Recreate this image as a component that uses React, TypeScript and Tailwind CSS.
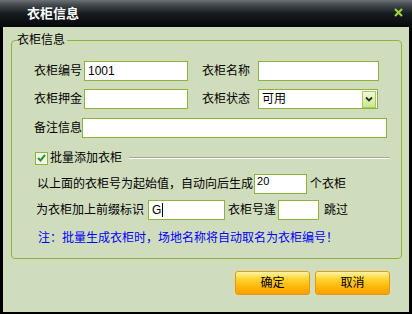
const font = "font-['Liberation_Sans','Noto_Sans_CJK_SC',sans-serif]";

function Box({ w, value = "" }: { w: string; value?: string }) {
  return (
    <input
      readOnly
      defaultValue={value}
      className={`${w} h-[20px] border border-[#8db33a] bg-white pl-[3px] text-[12px] text-black outline-none ${font}`}
    />
  );
}

export default function App() {
  return (
    <div className={`flex h-[314px] w-[412px] flex-col bg-black text-[12px] text-black ${font}`}>
      {/* title bar */}
      <div className="flex h-[27px] items-center justify-between bg-[linear-gradient(to_bottom,#6e7276_0%,#43494e_18%,#161c21_50%,#05080a_100%)] pl-[27px] pr-[9px]">
        <span className="text-[13px] font-bold leading-[16px] text-white">衣柜信息</span>
        <svg width="9" height="9" viewBox="0 0 9 9" className="mt-[-2px]">
          <path d="M1 1 L8 8 M8 1 L1 8" stroke="#9fd13a" strokeWidth="2.2" />
        </svg>
      </div>

      {/* body */}
      <div className="mx-[3px] mb-[2px] flex flex-1 flex-col bg-[#d0ddbd]">
        <fieldset className="ml-[8px] mr-[7px] mt-[6px] rounded-[4px] border border-[#8db33a]">
          <legend className="ml-[5px] pr-[2px] leading-[15px]">衣柜信息</legend>
          <div className="flex flex-col pb-[12px] pl-[22px] pt-[13px] leading-[16px]">
            <div className="flex h-[20px] items-center">
              <span className="w-[48px]">衣柜编号</span>
              <div className="ml-[2px]">
                <Box w="w-[104px]" value="1001" />
              </div>
              <span className="ml-[14px] w-[48px]">衣柜名称</span>
              <div className="ml-[8px]">
                <Box w="w-[121px]" />
              </div>
            </div>

            <div className="mt-[8px] flex h-[20px] items-center">
              <span className="w-[48px]">衣柜押金</span>
              <div className="ml-[2px]">
                <Box w="w-[104px]" />
              </div>
              <span className="ml-[14px] w-[48px]">衣柜状态</span>
              <div className="ml-[8px] flex h-[20px] w-[120px] items-center justify-between border border-[#8db33a] bg-white pl-[3px] pr-[1px]">
                <span>可用</span>
                <div className="flex h-[17px] w-[14px] items-center justify-center border border-[#a6c866] bg-[linear-gradient(to_bottom,#f2fbd8,#c8e88a)]">
                  <svg width="8" height="6" viewBox="0 0 8 6">
                    <path d="M1 1.5 L4 4.5 L7 1.5" fill="none" stroke="#2b2b2b" strokeWidth="1.8" />
                  </svg>
                </div>
              </div>
            </div>

            <div className="mt-[9px] flex h-[20px] items-center">
              <span className="w-[48px]">备注信息</span>
              <Box w="w-[305px]" />
            </div>

            <div className="mt-[12px] flex h-[16px] items-center">
              <div className="ml-[1px] flex h-[13px] w-[13px] items-center justify-center border border-[#8db33a] bg-[#f4f8ec]">
                <svg width="9" height="8" viewBox="0 0 9 8">
                  <path d="M1 4 L3.5 6.5 L8 1" fill="none" stroke="#25962b" strokeWidth="2" />
                </svg>
              </div>
              <span className="ml-[2px]">批量添加衣柜</span>
              <div className="ml-[7px] w-[261px] border-b border-t border-b-white border-t-[#a8a894]" />
            </div>

            <div className="mt-[8px] flex h-[20px] items-center">
              <span className="ml-[3px]">以上面的衣柜号为起始值，自动向后生成</span>
              <input
                readOnly
                defaultValue="20"
                className={`ml-[1px] h-[20px] w-[53px] border border-[#8db33a] bg-white pb-[6px] pl-[2px] text-[11px] outline-none ${font}`}
              />
              <span className="ml-[3px]">个衣柜</span>
            </div>

            <div className="mt-[6px] flex h-[20px] items-center">
              <span className="ml-[2px]">为衣柜加上前缀标识</span>
              <div className="ml-[4px] flex h-[20px] w-[77px] items-center border border-[#8db33a] bg-white pl-[3px]">
                <span>G</span>
                <span className="ml-[1px] h-[14px] w-px bg-black" />
              </div>
              <span className="ml-[3px]">衣柜号逢</span>
              <Box w="ml-[2px] w-[41px]" />
              <span className="ml-[5px]">跳过</span>
            </div>

            <div className="ml-[4px] mt-[10px] text-[#0000ff]">
              注：批量生成衣柜时，场地名称将自动取名为衣柜编号！
            </div>
          </div>
        </fieldset>

        <div className="mr-[19px] mt-[12px] flex justify-end gap-[5px]">
          <button className="h-[24px] w-[75px] rounded-[3px] border border-[#e59a12] bg-[linear-gradient(to_bottom,#fff3a8_0%,#ffd634_30%,#ffb408_70%,#ffa000_100%)] text-[12px]">
            确定
          </button>
          <button className="h-[24px] w-[75px] rounded-[3px] border border-[#e59a12] bg-[linear-gradient(to_bottom,#fff3a8_0%,#ffd634_30%,#ffb408_70%,#ffa000_100%)] text-[12px]">
            取消
          </button>
        </div>
      </div>
    </div>
  );
}
